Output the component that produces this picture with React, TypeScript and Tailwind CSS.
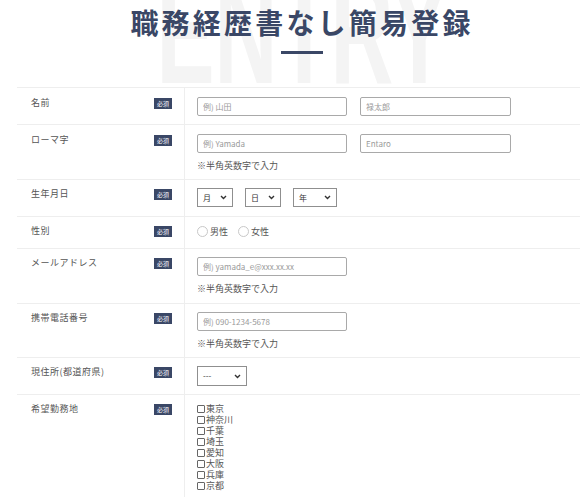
const jp = "font-['Noto_Sans_CJK_JP','Noto_Sans',sans-serif]";

function Badge() {
  return (
    <span className="mt-[1px] inline-flex h-[11px] w-[18px] shrink-0 items-center justify-center bg-[#3a4766] text-[6px] leading-none text-white">
      必須
    </span>
  );
}

function TextInput({ placeholder, width = "w-[150px]" }: { placeholder: string; width?: string }) {
  return (
    <input
      placeholder={placeholder}
      className={`${width} block h-[19px] rounded-[2px] border border-[#a9a9a9] bg-white px-[5px] text-[8px] text-[#333] placeholder:text-[#9a9a9a] outline-none`}
    />
  );
}

function Chevron() {
  return (
    <svg width="7" height="5" viewBox="0 0 7 5" className="shrink-0">
      <path d="M1 1l2.5 2.5L6 1" fill="none" stroke="#333" strokeWidth="1.4" />
    </svg>
  );
}

function FakeSelect({ label, width }: { label: string; width: string }) {
  return (
    <div className={`${width} flex items-center justify-between border border-[#8f8f8f] bg-white pl-[5px] pr-[5px] text-[8px] leading-none text-[#333]`}>
      <span>{label}</span>
      <Chevron />
    </div>
  );
}

function Note() {
  return <p className="mt-[6px] text-[9px] leading-[13px] text-[#555]">※半角英数字で入力</p>;
}

function Row({ label, children, pad }: { label: string; children: React.ReactNode; pad: string }) {
  return (
    <div className="flex border-t border-[#eeeeee]">
      <div className={`flex w-[168px] shrink-0 items-start justify-between border-r border-[#eeeeee] pl-[14px] pr-[12px] ${pad}`}>
        <span className="text-[9px] leading-[12px] tracking-[0.5px] text-[#555]">{label}</span>
        <Badge />
      </div>
      <div className={`flex-1 pl-[12px] ${pad}`}>{children}</div>
    </div>
  );
}

const prefs = ["東京", "神奈川", "千葉", "埼玉", "愛知", "大阪", "兵庫", "京都"];

export default function App() {
  return (
    <div className={`${jp} relative w-[580px] overflow-hidden bg-white`}>
      {/* Header */}
      <div className="relative h-[87px] pl-[24px]">
        <div className="pointer-events-none absolute inset-x-0 top-[-44px] flex justify-center pl-[25px] select-none">
          <span className="scale-x-[0.58] font-['Liberation_Sans',sans-serif] text-[150px] font-bold leading-none text-[#f4f4f4]">
            ENTRY
          </span>
        </div>
        <div className="relative flex flex-col items-center pt-[3px]">
          <h1 className="text-[28px] font-semibold leading-[38px] tracking-[3.2px] text-[#3a4766]">
            職務経歴書なし簡易登録
          </h1>
          <div className="mt-[10px] h-[3px] w-[42px] bg-[#3a4766]" />
        </div>
      </div>

      {/* Form table */}
      <div className="ml-[17px] w-[600px]">
        <Row label="名前" pad="pt-[9px] pb-[8px]">
          <div className="flex gap-[13px]">
            <TextInput placeholder="例) 山田" />
            <TextInput placeholder="禄太郎" width="w-[151px]" />
          </div>
        </Row>

        <Row label="ローマ字" pad="pt-[9px] pb-[7px]">
          <div className="flex gap-[13px]">
            <TextInput placeholder="例) Yamada" />
            <TextInput placeholder="Entaro" width="w-[151px]" />
          </div>
          <Note />
        </Row>

        <Row label="生年月日" pad="pt-[8px] pb-[9px]">
          <div className="flex gap-[12px]">
            <FakeSelect label="月" width="w-[36px] h-[19px]" />
            <FakeSelect label="日" width="w-[36px] h-[19px]" />
            <FakeSelect label="年" width="w-[44px] h-[19px]" />
          </div>
        </Row>

        <Row label="性別" pad="pt-[8px] pb-[10px]">
          <div className="flex h-[13px] items-center gap-[10px] text-[9px] text-[#555]">
            <label className="flex items-center gap-[2px]">
              <span className="h-[11px] w-[11px] rounded-full border border-[#c8c8c8]" />
              男性
            </label>
            <label className="flex items-center gap-[2px]">
              <span className="h-[11px] w-[11px] rounded-full border border-[#c8c8c8]" />
              女性
            </label>
          </div>
        </Row>

        <Row label="メールアドレス" pad="pt-[8px] pb-[8px]">
          <TextInput placeholder="例) yamada_e@xxx.xx.xx" />
          <Note />
        </Row>

        <Row label="携帯電話番号" pad="pt-[8px] pb-[7px]">
          <TextInput placeholder="例) 090-1234-5678" />
          <Note />
        </Row>

        <Row label="現住所(都道府県)" pad="pt-[8px] pb-[8px]">
          <FakeSelect label="---" width="w-[50px] h-[20px]" />
        </Row>

        <Row label="希望勤務地" pad="pt-[8px] pb-[10px]">
          <ul className="flex flex-col">
            {prefs.map((p) => (
              <li key={p} className="flex h-[11px] items-center gap-[1px] text-[9px] text-[#555]">
                <span className="h-[8px] w-[8px] rounded-[1px] border border-[#666]" />
                {p}
              </li>
            ))}
          </ul>
        </Row>
      </div>
    </div>
  );
}
